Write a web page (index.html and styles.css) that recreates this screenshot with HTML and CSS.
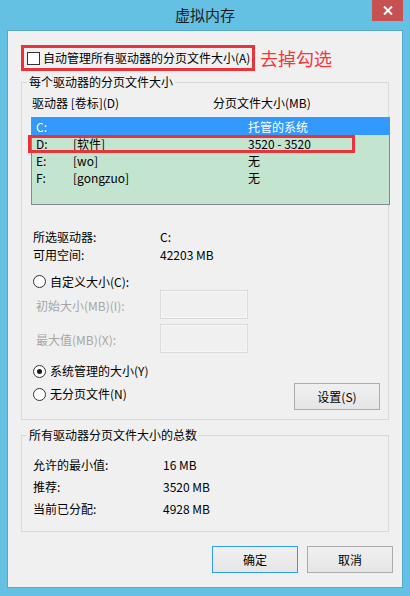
FILE: index.html
```html
<!DOCTYPE html>
<html>
<head>
<meta charset="utf-8">
<title>虚拟内存</title>
<link rel="stylesheet" href="styles.css">
</head>
<body>
<div class="window">
  <div class="titlebar">
    <span></span>
    <div class="title">虚拟内存</div>
    <div class="close">
      <svg width="10" height="9" viewBox="0 0 10 9"><path d="M1 0.5L9 8.5M9 0.5L1 8.5" stroke="#fff" stroke-width="2"/></svg>
    </div>
  </div>
  <div class="client">
    <div class="auto-row">
      <div class="auto-box"><span class="checkbox"></span><span class="auto-label">自动管理所有驱动器的分页文件大小(A)</span></div>
      <span class="note">去掉勾选</span>
    </div>

    <div class="group group-drives">
      <span class="legend">每个驱动器的分页文件大小</span>
      <div class="list-head"><span class="col-drive">驱动器 [卷标](D)</span><span>分页文件大小(MB)</span></div>
      <div class="listbox">
        <div class="row selected"><span class="c-letter">C:</span><span></span><span>托管的系统</span></div>
        <div class="row"><span class="c-letter">D:</span><span>[软件]</span><span>3520 - 3520</span></div>
        <div class="row"><span class="c-letter">E:</span><span>[wo]</span><span>无</span></div>
        <div class="row"><span class="c-letter">F:</span><span>[gongzuo]</span><span>无</span></div>
        <div class="mark"></div>
      </div>
      <div class="info">
        <div class="info-row"><span>所选驱动器:</span><span>C:</span></div>
        <div class="info-row"><span>可用空间:</span><span>42203 MB</span></div>
      </div>
      <div class="radio-row custom"><span class="radio"></span><span>自定义大小(C):</span></div>
      <div class="size-row"><span class="size-label">初始大小(MB)(I):</span><span class="size-box"></span></div>
      <div class="size-row second"><span class="size-label">最大值(MB)(X):</span><span class="size-box"></span></div>
      <div class="radio-row system"><span class="radio checked"></span><span>系统管理的大小(Y)</span></div>
      <div class="last-row">
        <div class="radio-row none"><span class="radio"></span><span>无分页文件(N)</span></div>
        <div class="btn set-btn">设置(S)</div>
      </div>
    </div>

    <div class="group group-total">
      <span class="legend">所有驱动器分页文件大小的总数</span>
      <div class="total-row"><span>允许的最小值:</span><span>16 MB</span></div>
      <div class="total-row"><span>推荐:</span><span>3520 MB</span></div>
      <div class="total-row"><span>当前已分配:</span><span>4928 MB</span></div>
    </div>

    <div class="buttons">
      <div class="btn default">确定</div>
      <div class="btn">取消</div>
    </div>
  </div>
</div>
</body>
</html>
```

FILE: styles.css
```css
* { box-sizing: border-box; }

html, body {
  margin: 0;
  padding: 0;
}

body {
  font-family: "Noto Sans CJK SC", "Noto Sans", sans-serif;
  font-size: 12px;
  color: #000;
  background: #65c1e4;
}

.window {
  width: 410px;
  height: 596px;
  background: #65c1e4;
  padding: 0 7px 8px 7px;
  display: flex;
  flex-direction: column;
}

.titlebar {
  height: 30px;
  display: grid;
  grid-template-columns: 1fr auto 1fr;
  flex: none;
}

.title {
  font-size: 15px;
  line-height: 30px;
  color: #1c1c1c;
  text-align: center;
}

.close {
  justify-self: end;
  width: 31px;
  height: 21px;
  background: #c75050;
  display: flex;
  align-items: center;
  justify-content: center;
}

.client {
  height: 558px;
  background: #f0f0f0;
  border: 1px solid #56a8cc;
  display: flex;
  flex-direction: column;
}

/* auto-manage checkbox */
.auto-row {
  margin-top: 14px;
  margin-left: 13px;
  display: flex;
  align-items: center;
}

.auto-box {
  width: 234px;
  height: 26px;
  border: 3px solid #eb3238;
  padding-left: 3px;
  display: flex;
  align-items: center;
}

.checkbox {
  width: 13px;
  height: 13px;
  border: 1px solid #333;
  background: #fff;
  flex: none;
}

.auto-label {
  margin-left: 3px;
  line-height: 16px;
  white-space: nowrap;
}

.note {
  margin-left: 5px;
  font-size: 18px;
  line-height: 24px;
  color: #f0393c;
}

/* group boxes */
.group {
  position: relative;
  margin-left: 13px;
  width: 368px;
  border: 1px solid #d9d9d9;
  display: flex;
  flex-direction: column;
}

.legend {
  position: absolute;
  top: -9px;
  left: 5px;
  padding: 0 2px;
  line-height: 16px;
  background: #f0f0f0;
  white-space: nowrap;
}

.group-drives {
  margin-top: 11px;
  padding-bottom: 9px;
}

.list-head {
  margin-top: 12px;
  padding-left: 10px;
  line-height: 16px;
  display: flex;
}

.col-drive {
  width: 181px;
}

.listbox {
  position: relative;
  margin: 6px -2px 0 9px;
  height: 88px;
  border: 1px solid #828790;
  background: #c3e5d0;
}

.row {
  height: 17px;
  line-height: 17px;
  display: grid;
  grid-template-columns: 37px 175px 1fr;
  padding-left: 4px;
  white-space: nowrap;
}

.row.selected {
  background: #3399ff;
  color: #fff;
}

.mark {
  position: absolute;
  left: -4px;
  top: 17px;
  width: 327px;
  height: 18px;
  border: 3px solid #eb3238;
}

.info {
  margin-top: 23px;
  padding-left: 11px;
}

.info-row {
  height: 18px;
  line-height: 18px;
  display: grid;
  grid-template-columns: 127px 1fr;
}

.radio-row {
  display: flex;
  align-items: center;
  padding-left: 11px;
  height: 18px;
  line-height: 18px;
}

.radio-row.custom {
  margin-top: 9px;
  height: 17px;
}

.radio {
  width: 13px;
  height: 13px;
  border: 1px solid #333;
  border-radius: 50%;
  background: #fff;
  margin-right: 4px;
  flex: none;
  display: flex;
  align-items: center;
  justify-content: center;
}

.radio.checked::after {
  content: "";
  width: 5px;
  height: 5px;
  border-radius: 50%;
  background: #1a1a1a;
}

.size-row {
  display: flex;
  align-items: center;
  padding-left: 14px;
  height: 29px;
}

.size-row.second {
  margin-top: 5px;
}

.size-label {
  width: 124px;
  color: #a6a6a6;
  line-height: 16px;
  margin-top: 3px;
}

.size-box {
  width: 88px;
  height: 29px;
  border: 1px solid #dadada;
  box-shadow: inset 0 0 0 1px #f7f7f7;
  background: #f0f0f0;
}

.radio-row.system {
  margin-top: 9px;
}

.last-row {
  margin-top: 3px;
  display: flex;
  align-items: flex-start;
}

.radio-row.none {
  margin-top: 2px;
}

.btn {
  width: 86px;
  height: 27px;
  border: 1px solid #acacac;
  background: linear-gradient(#f0f0f0, #e5e5e5);
  display: flex;
  align-items: center;
  justify-content: center;
  line-height: 16px;
}

.set-btn {
  margin-left: auto;
  margin-right: 8px;
}

.btn.default {
  border-color: #3399ff;
}

.group-total {
  margin-top: 15px;
  padding: 18px 0 11px 11px;
}

.total-row {
  height: 22px;
  line-height: 22px;
  display: grid;
  grid-template-columns: 130px 1fr;
}

.buttons {
  margin-top: 14px;
  padding-right: 9px;
  display: flex;
  justify-content: flex-end;
  gap: 9px;
}
```
